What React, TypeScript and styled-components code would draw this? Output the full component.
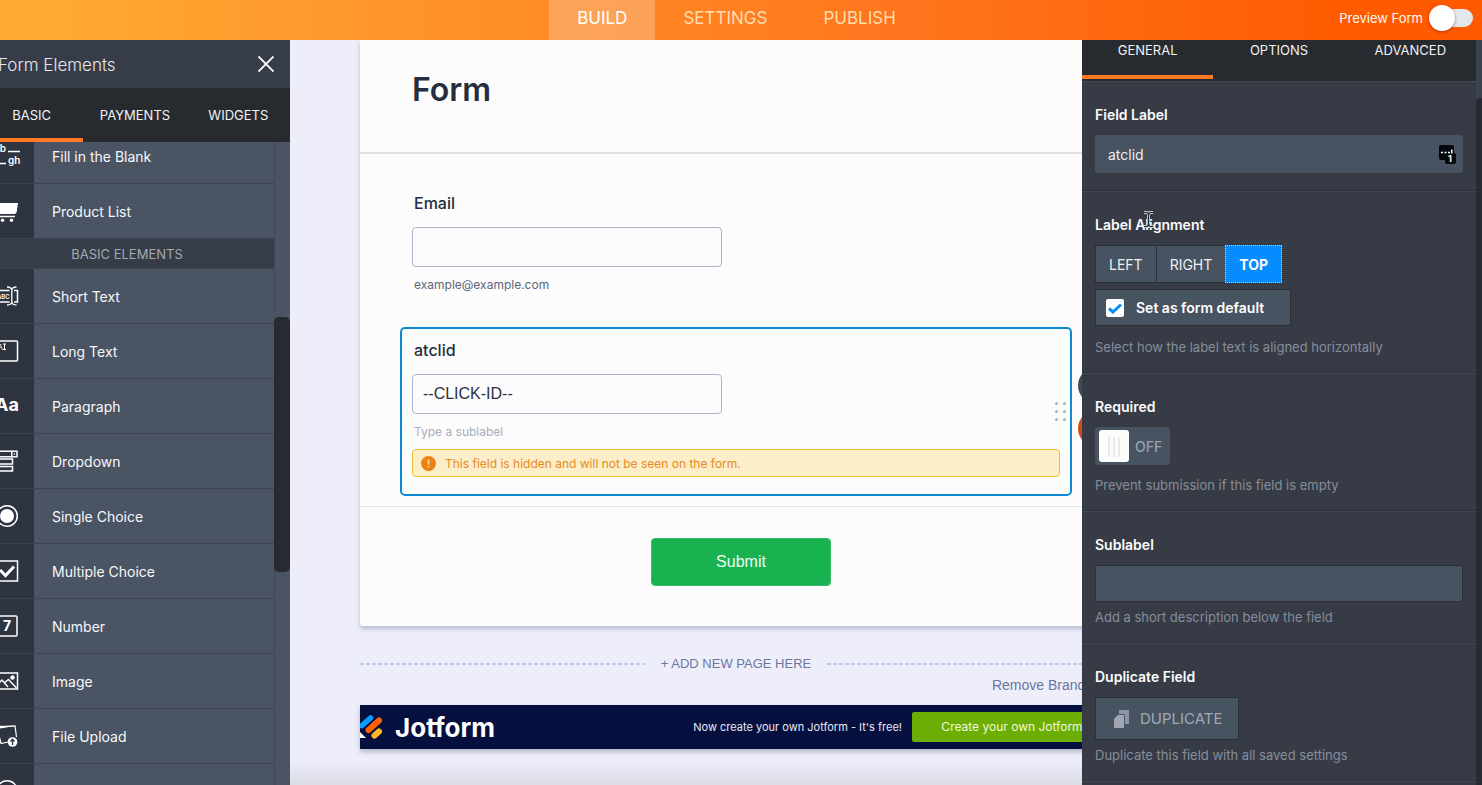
import React from "react";
import styled, { createGlobalStyle } from "styled-components";

const ui = `Inter, "Liberation Sans", sans-serif`;
const arial = `"Liberation Sans", Arial, sans-serif`;

const GlobalStyle = createGlobalStyle`
  *, *::before, *::after { box-sizing: border-box; }
  body { margin: 0; font-family: ${ui}; background: #eeeefb; }
  button, input { font-family: inherit; }
  h1, h2, h3, p, ul { margin: 0; padding: 0; }
`;

const Page = styled.div`
  display: flex;
  flex-direction: column;
  height: 100vh;
  overflow: hidden;
`;

/* ---------- top bar ---------- */
const TopBar = styled.header`
  display: grid;
  grid-template-columns: 1fr auto 1fr;
  flex: none;
  height: 40px;
  padding-right: 9px;
  background: linear-gradient(90deg, #ffac35 0%, #ff8c26 37%, #ff761e 60%, #ff5a00 92%);
`;

const MainNav = styled.nav`
  grid-column: 2;
  display: flex;
`;

const NavLink = styled.a<{ $active?: boolean }>`
  padding: 6px 28px 0;
  font-size: 17px;
  line-height: 24px;
  text-decoration: none;
  color: ${(p) => (p.$active ? "#ffffff" : "#ffdcae")};
  background: ${(p) => (p.$active ? "rgba(250, 190, 140, 0.5)" : "transparent")};
`;

const Preview = styled.label`
  display: flex;
  align-items: center;
  justify-content: flex-end;
  gap: 6px;
  padding-bottom: 4px;
  color: #fffaf4;
  font-size: 13px;
`;

const PreviewSwitch = styled.input`
  appearance: none;
  position: relative;
  width: 44px;
  height: 18px;
  margin: 0;
  border-radius: 9px;
  background: #e3e6ea;

  &::before {
    content: "";
    position: absolute;
    left: 0;
    top: -4px;
    width: 26px;
    height: 26px;
    border-radius: 50%;
    background: #fff;
    box-shadow: 0 1px 3px rgba(80, 20, 0, 0.5);
  }
`;

const Workspace = styled.div`
  display: flex;
  flex: 1;
  min-height: 0;
`;

/* ---------- left panel ---------- */
const ElementsPanel = styled.aside`
  display: flex;
  flex-direction: column;
  flex: none;
  width: 310px;
  margin-left: -20px;
  background: #4a5463;
`;

const PanelHeader = styled.div`
  display: flex;
  align-items: center;
  justify-content: space-between;
  flex: none;
  height: 48px;
  padding: 0 16px 0 18px;
  background: #363c48;
`;

const PanelTitle = styled.h2`
  padding-top: 2px;
  font-size: 17px;
  font-weight: 300;
  line-height: 24px;
  color: #e6e8ec;
`;

const CloseButton = styled.button`
  display: flex;
  padding: 0;
  border: 0;
  background: none;
  color: #fff;
`;

const Tabs = styled.div<{ $height: number; $inset?: boolean }>`
  display: grid;
  grid-template-columns: repeat(3, 1fr);
  flex: none;
  height: ${(p) => p.$height}px;
  padding-bottom: ${(p) => (p.$inset ? 2 : 0)}px;
  background: #272b30;
`;

const Tab = styled.button<{ $active?: boolean; $low?: boolean }>`
  padding: ${(p) => (p.$low ? "0 0 15px" : "4px 0 0")};
  border: 0;
  border-bottom: 4px solid ${(p) => (p.$active ? "#ff7a24" : "transparent")};
  background: none;
  color: #f1f2f4;
  font-size: 13px;
  line-height: 20px;
`;

const ElementScroller = styled.div`
  display: flex;
  flex: 1;
  min-height: 0;
  overflow: hidden;
`;

const ElementList = styled.ul`
  flex: 1;
  margin-top: -13px;
  list-style: none;
`;

const ElementRow = styled.li`
  display: flex;
  height: 55px;
  border-bottom: 1px solid #3c4452;
`;

const IconCell = styled.div`
  display: flex;
  align-items: center;
  justify-content: center;
  flex: none;
  width: 54px;
  background: #2e3440;
  color: #fff;
`;

const ElementName = styled.div`
  display: flex;
  align-items: center;
  padding-left: 18px;
  color: #f7f8fa;
  font-size: 14px;
`;

const GroupHeading = styled.li`
  height: 30px;
  border-bottom: 1px solid #3c4452;
  background: #363c48;
  color: #a3a8b1;
  font-size: 13px;
  line-height: 30px;
  text-align: center;
`;

const ScrollTrack = styled.div`
  width: 16px;
  padding-top: 175px;
  box-shadow: inset 1px 0 #414957;
`;

const ScrollThumb = styled.div`
  height: 255px;
  border-radius: 5px;
  background: #272b30;
`;

/* ---------- canvas ---------- */
const Canvas = styled.main`
  flex: 1;
  min-width: 0;
  padding: 0 10px 0 70px;
  overflow: hidden;
  background: linear-gradient(0deg, #dcdce7 0, #eeeefb 26px);
`;

const Sheet = styled.form`
  border-radius: 0 0 3px 3px;
  background: #fcfcfc;
  box-shadow: 0 3px 4px rgba(90, 95, 120, 0.35);
`;

const SheetHeader = styled.div`
  height: 114px;
  padding: 30px 52px 0;
  border-bottom: 2px solid #e1e1e5;
`;

const FormTitle = styled.h1`
  color: #252d3e;
  font-size: 32px;
  font-weight: 600;
  line-height: 40px;
`;

const FieldStack = styled.div`
  display: flex;
  flex-direction: column;
  gap: 21px;
  padding: 26px 40px 10px;
  border-bottom: 1px solid #e3e4ec;
`;

const Field = styled.div<{ $selected?: boolean }>`
  position: relative;
  padding: ${(p) => (p.$selected ? "11px 10px 17px" : "11px 10px")};
  border: 2px solid ${(p) => (p.$selected ? "#1089d3" : "transparent")};
  border-radius: 5px;
`;

const FieldLabel = styled.label`
  display: block;
  margin-bottom: 14px;
  padding-left: 2px;
  color: #252d3e;
  font-size: 16px;
  font-weight: 500;
  line-height: 20px;
`;

const FieldInput = styled.input`
  display: block;
  width: 310px;
  height: 40px;
  padding: 0 10px;
  border: 1px solid #afb5c6;
  border-radius: 4px;
  background: #fcfcfc;
  color: #2a3040;
  font-family: ${arial};
  font-size: 16px;
`;

const Sublabel = styled.p<{ $muted?: boolean }>`
  margin-top: 10px;
  padding-left: 2px;
  color: ${(p) => (p.$muted ? "#a9aebc" : "#5d6678")};
  font-size: 12px;
  line-height: 16px;
`;

const Notice = styled.p`
  display: flex;
  align-items: center;
  gap: 9px;
  height: 28px;
  margin-top: 9px;
  padding-left: 8px;
  border: 1px solid #e8c22a;
  border-radius: 4px;
  background: #fbeec8;
  color: #e88a1e;
  font-size: 12px;
`;

const DragHandle = styled.div`
  position: absolute;
  right: 4px;
  top: 73px;
  display: grid;
  grid-template-columns: repeat(2, 3px);
  gap: 5px;

  span {
    width: 3px;
    height: 3px;
    border-radius: 50%;
    background: #a9adbe;
  }
`;

const FieldActions = styled.div`
  position: absolute;
  left: 100%;
  top: 38px;
  display: grid;
  gap: 6px;
  padding-left: 8px;
`;

const RoundButton = styled.button<{ $color: string }>`
  width: 37px;
  height: 37px;
  padding: 0;
  border: 0;
  border-radius: 50%;
  background: ${(p) => p.$color};
`;

const SubmitRow = styled.div`
  display: flex;
  justify-content: center;
  padding: 31px 0 40px 10px;
`;

const SubmitButton = styled.button`
  width: 180px;
  height: 48px;
  border: 1px solid #37bd68;
  border-radius: 4px;
  background: #18b350;
  color: #effcf3;
  font-family: ${arial};
  font-size: 16px;
`;

const AddPage = styled.div`
  display: flex;
  align-items: center;
  gap: 16px;
  margin-top: 29px;

  &::before,
  &::after {
    content: "";
    flex: 1;
    height: 2px;
    background: repeating-linear-gradient(90deg, #bec8ea 0, #bec8ea 4px, transparent 4px, transparent 6px);
  }
`;

const PlainButton = styled.button<{ $size: number }>`
  padding: 0;
  border: 0;
  background: none;
  color: #6b76a0;
  font-family: ${arial};
  font-size: ${(p) => p.$size}px;
  line-height: 18px;
`;

const BrandingRow = styled.div`
  display: flex;
  justify-content: flex-end;
  padding: 3px 8px 11px 0;
`;

const Banner = styled.footer`
  display: flex;
  align-items: center;
  height: 44px;
  background: #06103f;
  box-shadow: 0 3px 5px rgba(90, 95, 120, 0.4);
  color: #fff;
`;

const Wordmark = styled.span`
  margin-left: 11px;
  padding-top: 1px;
  font-size: 26px;
  font-weight: 700;
  line-height: 32px;
`;

const BannerText = styled.span`
  margin-left: auto;
  margin-right: 10px;
  color: #e6e9f4;
  font-size: 11px;
`;

const BannerButton = styled.a`
  width: 200px;
  height: 30px;
  border-radius: 2px;
  background: #6cae04;
  color: #f0f8df;
  font-size: 12px;
  line-height: 30px;
  text-align: center;
  text-decoration: none;
`;

/* ---------- right panel ---------- */
const PropertiesPanel = styled.aside`
  position: relative;
  z-index: 1;
  display: flex;
  flex: none;
  width: 400px;
  margin-left: -40px;
  background: #363b46;
`;

const PropertiesBody = styled.div`
  flex: 1;
  min-width: 0;
  overflow: hidden;
`;

const PropertiesTrack = styled.div`
  width: 6px;
  padding-top: 58px;
  background: #3c4350;
`;

const PropertiesThumb = styled.div`
  height: 100%;
  border-radius: 4px 0 0 0;
  background: #262a33;
`;

const Section = styled.section<{ $bare?: boolean }>`
  position: relative;
  padding: 23px 13px ${(p) => (p.$bare ? 17 : 15)}px;
  border-top: 1px solid #424955;
  border-bottom: 1px solid #2c313a;
`;

const SectionTitle = styled.label`
  display: block;
  margin-bottom: 10px;
  color: #fbfbfc;
  font-size: 14px;
  font-weight: 600;
  line-height: 20px;
`;

const Hint = styled.p<{ $gap: number }>`
  margin-top: ${(p) => p.$gap}px;
  color: #878d9a;
  font-size: 13px;
  line-height: 20px;
`;

const InputWrap = styled.div`
  position: relative;
`;

const PanelInput = styled.input<{ $outlined?: boolean }>`
  display: block;
  width: 100%;
  height: ${(p) => (p.$outlined ? 37 : 38)}px;
  padding: 0 12px;
  border: 1px solid ${(p) => (p.$outlined ? "#2a2f38" : "#475360")};
  border-radius: 2px;
  background: #475360;
  color: #eceef1;
  font-size: 14px;
`;

const InputBadge = styled.svg`
  position: absolute;
  right: 7px;
  top: 10px;
`;

const Segments = styled.div`
  display: flex;
  width: max-content;
  height: 38px;
`;

const Segment = styled.button<{ $active?: boolean }>`
  padding: 0 13px;
  margin-right: -1px;
  border: 1px ${(p) => (p.$active ? "dotted #9fd4ff" : "solid #2a2f38")};
  background: ${(p) => (p.$active ? "#058cff" : "#475360")};
  color: ${(p) => (p.$active ? "#ffffff" : "#eff0f3")};
  font-size: 14px;
  font-weight: ${(p) => (p.$active ? 700 : 400)};
`;

const DefaultOption = styled.label`
  display: flex;
  align-items: center;
  gap: 12px;
  width: 196px;
  height: 37px;
  margin-top: 6px;
  padding-left: 10px;
  border: 1px solid #2a2f38;
  background: #475360;
  color: #fff;
  font-size: 14px;
  font-weight: 600;
`;

const CheckSlot = styled.span`
  position: relative;
  display: flex;

  svg {
    position: absolute;
    left: 2px;
    top: 4px;
    pointer-events: none;
  }
`;

const CheckInput = styled.input`
  appearance: none;
  width: 18px;
  height: 18px;
  margin: 0;
  border-radius: 2px;
  background: #fff;
`;

const RequiredSwitch = styled.span`
  position: relative;
  display: flex;
  align-items: center;
  width: 75px;
  height: 38px;
  padding-left: 40px;
  border-radius: 4px;
  background: #475360;
  color: #9aa1ae;
  font-size: 14px;
  font-weight: 500;
`;

const RequiredInput = styled.input`
  appearance: none;
  position: absolute;
  left: 4px;
  top: 3px;
  width: 30px;
  height: 32px;
  margin: 0;
  border-radius: 3px;
  background:
    linear-gradient(#e9e9eb, #e9e9eb) 9px 7px / 2px 20px no-repeat,
    linear-gradient(#e9e9eb, #e9e9eb) 14px 7px / 2px 20px no-repeat,
    linear-gradient(#e9e9eb, #e9e9eb) 19px 7px / 2px 20px no-repeat,
    #fcfcfc;
`;

const DuplicateButton = styled.button`
  display: flex;
  align-items: center;
  gap: 10px;
  height: 43px;
  padding: 0 15px 0 18px;
  border: 1px solid #2a2f38;
  background: #475360;
  color: #a3a9b4;
  font-size: 15px;
`;

const Cursor = styled.svg`
  position: absolute;
  left: 61px;
  top: 18px;
`;

/* ---------- element icons ---------- */
const icons: Record<string, React.ReactNode> = {
  blank: (
    <>
      <g fill="currentColor" stroke="none" fontFamily="Inter" fontSize="10" fontWeight="600">
        <text x="1" y="10">ab</text>
        <text x="15" y="22">gh</text>
      </g>
      <path d="M15 9.500H27M1 21.500H13" />
    </>
  ),
  cart: (
    <>
      <path d="M2 6H25L23.800 14.500Q23.300 17 21 17H6Z" fill="currentColor" stroke="none" />
      <path d="M5 19.500H22" />
      <circle cx="9.500" cy="23.300" r="1.700" fill="currentColor" stroke="none" />
      <circle cx="18.500" cy="23.300" r="1.700" fill="currentColor" stroke="none" />
    </>
  ),
  short: (
    <>
      <path d="M1 8.500H16.500M21 8.500H24.500V20H21M16.500 20H1" />
      <path d="M14 5C17 5 18.500 6 18.800 8V20C18.500 22 17 23 14 23M23.500 5C20.500 5 19 6 18.800 8V20C19 22 20.500 23 23.500 23" strokeWidth="1.300" />
      <text x="4" y="17" fontFamily="Inter" fontSize="6" fontWeight="600" fill="currentColor" stroke="none">ABC</text>
    </>
  ),
  long: (
    <>
      <rect x="1" y="4" width="23.500" height="20" rx="1" />
      <text x="5" y="13" fontFamily="Inter" fontSize="7" fill="currentColor" stroke="none">A</text>
      <path d="M10 7H13M11.500 7V12.500M10 12.500H13" strokeWidth="1" />
    </>
  ),
  paragraph: (
    <text x="2" y="19" fontFamily="Inter" fontSize="18" fontWeight="700" fill="currentColor" stroke="none">Aa</text>
  ),
  dropdown: (
    <>
      <rect x="1" y="4.200" width="23" height="5.600" />
      <path d="M18.800 4V10" />
      <circle cx="21.400" cy="7" r="0.800" fill="currentColor" stroke="none" />
      <rect x="1" y="12" width="18.500" height="5" />
      <rect x="1" y="19.500" width="18.500" height="4.500" />
    </>
  ),
  single: (
    <>
      <circle cx="14" cy="14" r="10.300" />
      <circle cx="14" cy="14" r="7" fill="currentColor" stroke="none" />
    </>
  ),
  multiple: (
    <>
      <rect x="4" y="4" width="20.500" height="20" />
      <path d="M7 13L12.500 18.500L21 9.500" strokeWidth="3" />
    </>
  ),
  number: (
    <>
      <rect x="3" y="4" width="21" height="20" rx="1" />
      <text x="10" y="19" fontFamily="Inter" fontSize="14" fontWeight="700" fill="currentColor" stroke="none">7</text>
    </>
  ),
  image: (
    <>
      <rect x="3" y="6" width="21.500" height="16" />
      <path d="M3 19L9 13L15 20M11 16L15.500 12.500L23.500 21" />
      <circle cx="19.500" cy="10.500" r="2.200" fill="currentColor" stroke="none" />
    </>
  ),
  upload: (
    <>
      <path d="M15 20L8 21.500L4 5L22 4L23.500 15" strokeWidth="1.200" />
      <path d="M2 3.500L22 4L4 7Z" fill="currentColor" stroke="none" />
      <circle cx="19.500" cy="20" r="4.800" fill="currentColor" stroke="none" />
      <path d="M19.500 23V17.500M17.500 19.500L19.500 17.300L21.500 19.500" stroke="#2e3440" strokeWidth="1.300" />
    </>
  ),
  time: <circle cx="14" cy="14" r="10.300" />,
};

function ElementItem({ icon, name }: { icon: string; name: string }) {
  return (
    <ElementRow>
      <IconCell>
        <svg width="28" height="28" viewBox="0 0 28 28" fill="none" stroke="currentColor" strokeWidth="1.500" aria-hidden="true">
          {icons[icon]}
        </svg>
      </IconCell>
      <ElementName>{name}</ElementName>
    </ElementRow>
  );
}

const basicElements = [
  ["short", "Short Text"],
  ["long", "Long Text"],
  ["paragraph", "Paragraph"],
  ["dropdown", "Dropdown"],
  ["single", "Single Choice"],
  ["multiple", "Multiple Choice"],
  ["number", "Number"],
  ["image", "Image"],
  ["upload", "File Upload"],
  ["time", ""],
];

export default function App() {
  return (
    <Page>
      <GlobalStyle />
      <TopBar>
        <MainNav>
          <NavLink href="#build" $active>BUILD</NavLink>
          <NavLink href="#settings">SETTINGS</NavLink>
          <NavLink href="#publish">PUBLISH</NavLink>
        </MainNav>
        <Preview>
          Preview Form
          <PreviewSwitch type="checkbox" role="switch" />
        </Preview>
      </TopBar>

      <Workspace>
        <ElementsPanel>
          <PanelHeader>
            <PanelTitle>Form Elements</PanelTitle>
            <CloseButton type="button" aria-label="Close">
              <svg width="16" height="16" viewBox="0 0 16 16" fill="none" stroke="currentColor" strokeWidth="1.800">
                <path d="M0.500 0.500L15.500 15.500M15.500 0.500L0.500 15.500" />
              </svg>
            </CloseButton>
          </PanelHeader>
          <Tabs $height={54}>
            <Tab type="button" $active>BASIC</Tab>
            <Tab type="button">PAYMENTS</Tab>
            <Tab type="button">WIDGETS</Tab>
          </Tabs>
          <ElementScroller>
            <ElementList>
              <ElementItem icon="blank" name="Fill in the Blank" />
              <ElementItem icon="cart" name="Product List" />
              <GroupHeading>BASIC ELEMENTS</GroupHeading>
              {basicElements.map(([icon, name]) => (
                <ElementItem key={icon} icon={icon} name={name} />
              ))}
            </ElementList>
            <ScrollTrack>
              <ScrollThumb />
            </ScrollTrack>
          </ElementScroller>
        </ElementsPanel>

        <Canvas>
          <Sheet onSubmit={(e) => e.preventDefault()}>
            <SheetHeader>
              <FormTitle>Form</FormTitle>
            </SheetHeader>
            <FieldStack>
              <Field>
                <FieldLabel htmlFor="email">Email</FieldLabel>
                <FieldInput id="email" type="email" />
                <Sublabel>example@example.com</Sublabel>
              </Field>
              <Field $selected>
                <FieldLabel htmlFor="atclid">atclid</FieldLabel>
                <FieldInput id="atclid" type="text" defaultValue="--CLICK-ID--" />
                <Sublabel $muted>Type a sublabel</Sublabel>
                <Notice>
                  <svg width="15" height="15" viewBox="0 0 15 15" aria-hidden="true">
                    <circle cx="7.500" cy="7.500" r="7.500" fill="#ee8113" />
                    <path d="M7.500 3.500V8.500M7.500 10V11.500" stroke="#fbdca0" strokeWidth="1.800" />
                  </svg>
                  This field is hidden and will not be seen on the form.
                </Notice>
                <DragHandle>
                  <span /><span /><span /><span /><span /><span />
                </DragHandle>
                <FieldActions>
                  <RoundButton type="button" aria-label="Field properties" $color="#414956" />
                  <RoundButton type="button" aria-label="Delete field" $color="#d24a14" />
                </FieldActions>
              </Field>
            </FieldStack>
            <SubmitRow>
              <SubmitButton type="submit">Submit</SubmitButton>
            </SubmitRow>
          </Sheet>

          <AddPage>
            <PlainButton type="button" $size={13}>+ ADD NEW PAGE HERE</PlainButton>
          </AddPage>
          <BrandingRow>
            <PlainButton type="button" $size={14}>Remove Branding</PlainButton>
          </BrandingRow>
          <Banner>
            <svg width="24" height="30" viewBox="0 0 24 30" fill="none" strokeLinecap="round" aria-hidden="true">
              <path d="M2 13.500L10.500 6" stroke="#0a9bff" strokeWidth="5.500" />
              <path d="M8.500 18L19 8.500" stroke="#ff6100" strokeWidth="6" />
              <path d="M14.500 23.500L19 19.500" stroke="#ffb629" strokeWidth="6" />
              <path d="M0 20L6 26H0Z" fill="#fff" />
            </svg>
            <Wordmark>Jotform</Wordmark>
            <BannerText>Now create your own Jotform - It's free!</BannerText>
            <BannerButton href="#create">Create your own Jotform</BannerButton>
          </Banner>
        </Canvas>

        <PropertiesPanel>
          <PropertiesBody>
            <Tabs $height={41} $inset>
              <Tab type="button" $low $active>GENERAL</Tab>
              <Tab type="button" $low>OPTIONS</Tab>
              <Tab type="button" $low>ADVANCED</Tab>
            </Tabs>
            <Section $bare>
              <SectionTitle htmlFor="field-label">Field Label</SectionTitle>
              <InputWrap>
                <PanelInput id="field-label" defaultValue="atclid" />
                <InputBadge width="17" height="19" viewBox="0 0 17 19" aria-hidden="true">
                  <rect width="15" height="15" rx="2" fill="#06080c" />
                  <rect x="6" y="8" width="11" height="11" rx="2" fill="#06080c" />
                  <path d="M2 7.500H4M5.500 7.500H7.500M9 7.500H11M12.800 4.500V8.500" stroke="#fff" strokeWidth="1.500" />
                  <text x="9" y="17" fontFamily="Inter" fontSize="9" fontWeight="700" fill="#fff">1</text>
                </InputBadge>
              </InputWrap>
            </Section>
            <Section>
              <SectionTitle as="h3">Label Alignment</SectionTitle>
              <Cursor width="11" height="18" viewBox="0 0 11 18" fill="none" aria-hidden="true">
                <path d="M1 2.500H4L5.500 4L7 2.500H10M5.500 4V14M1 16.500H4L5.500 14.500L7 16.500H10" stroke="#c9ccd2" strokeWidth="3" />
                <path d="M1 2.500H4L5.500 4L7 2.500H10M5.500 4V14M1 16.500H4L5.500 14.500L7 16.500H10" stroke="#23272f" strokeWidth="1.200" />
              </Cursor>
              <Segments>
                <Segment type="button">LEFT</Segment>
                <Segment type="button">RIGHT</Segment>
                <Segment type="button" $active>TOP</Segment>
              </Segments>
              <DefaultOption>
                <CheckSlot>
                  <CheckInput type="checkbox" defaultChecked />
                  <svg width="14" height="11" viewBox="0 0 14 11" fill="none" stroke="#0a8cf5" strokeWidth="3">
                    <path d="M1 5.500L5 9L13 1.500" />
                  </svg>
                </CheckSlot>
                Set as form default
              </DefaultOption>
              <Hint $gap={11}>Select how the label text is aligned horizontally</Hint>
            </Section>
            <Section>
              <SectionTitle htmlFor="required">Required</SectionTitle>
              <RequiredSwitch>
                <RequiredInput id="required" type="checkbox" role="switch" />
                OFF
              </RequiredSwitch>
              <Hint $gap={10}>Prevent submission if this field is empty</Hint>
            </Section>
            <Section>
              <SectionTitle htmlFor="sublabel">Sublabel</SectionTitle>
              <PanelInput id="sublabel" $outlined />
              <Hint $gap={5}>Add a short description below the field</Hint>
            </Section>
            <Section>
              <SectionTitle as="h3">Duplicate Field</SectionTitle>
              <DuplicateButton type="button">
                <svg width="16" height="18" viewBox="0 0 16 18" aria-hidden="true">
                  <path d="M5 0H15V14H11V5L10 4H5Z" fill="#8d95a2" />
                  <path d="M4 5H10V18H0V9Z" fill="#a0a7b3" />
                </svg>
                DUPLICATE
              </DuplicateButton>
              <Hint $gap={5}>Duplicate this field with all saved settings</Hint>
            </Section>
            <Section />
          </PropertiesBody>
          <PropertiesTrack>
            <PropertiesThumb />
          </PropertiesTrack>
        </PropertiesPanel>
      </Workspace>
    </Page>
  );
}
